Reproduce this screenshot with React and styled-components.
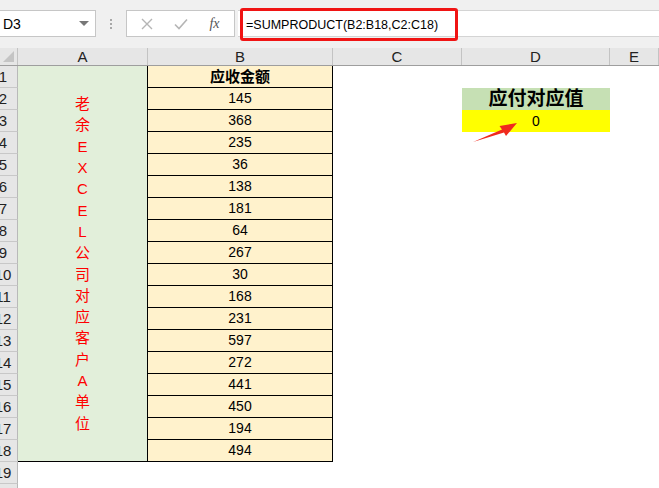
import React from "react";
import styled, { createGlobalStyle } from "styled-components";

const GlobalStyle = createGlobalStyle`
  html, body { margin: 0; padding: 0; background: #fff; }
  body {
    width: 659px;
    height: 488px;
    overflow: hidden;
    font-family: "Liberation Sans", "Noto Sans CJK SC", sans-serif;
  }
  * { box-sizing: border-box; }
`;

const Window = styled.div`
  position: relative;
  width: 659px;
  height: 488px;
  overflow: hidden;
  background: #fff;
`;

const Toolbar = styled.div`
  height: 48px;
  background: #f0f0f0;
  display: flex;
  align-items: flex-start;
  padding-top: 10px;
`;

const NameBox = styled.div`
  width: 96px;
  height: 27px;
  background: #fff;
  border: 1px solid #c6c6c6;
  border-left: none;
  display: flex;
  align-items: center;
  justify-content: space-between;
  padding: 0 6px 0 3px;
  font-size: 14px;
  color: #000;
`;

const Caret = styled.span`
  width: 0;
  height: 0;
  border-left: 5px solid transparent;
  border-right: 5px solid transparent;
  border-top: 5px solid #777;
`;

const Grip = styled.div`
  width: 30px;
  height: 27px;
  display: flex;
  flex-direction: column;
  align-items: center;
  justify-content: center;
  gap: 2px;
  span {
    width: 2px;
    height: 2px;
    background: #a8a8a8;
  }
`;

const ActionBox = styled.div`
  width: 109px;
  height: 27px;
  background: #fff;
  border: 1px solid #c6c6c6;
  display: flex;
  align-items: center;
  justify-content: space-around;
  padding: 0 4px;
`;

const Fx = styled.span`
  font-family: "Liberation Serif", serif;
  font-style: italic;
  font-size: 14px;
  color: #555;
`;

const FormulaField = styled.div`
  flex: 1;
  height: 27px;
  margin-left: 3px;
  background: #fff;
  border-top: 1px solid #d4d4d4;
  border-bottom: 1px solid #d4d4d4;
  position: relative;
`;

const FormulaHighlight = styled.div`
  position: absolute;
  left: 2px;
  top: -3px;
  width: 218px;
  height: 33px;
  border: 3px solid #f01414;
  border-radius: 3px;
  display: flex;
  align-items: center;
  padding-left: 3px;
  font-size: 12.5px;
  color: #000;
`;

const HeaderRow = styled.div`
  display: grid;
  grid-template-columns: 18px 130px 185px 129px 148px 1fr;
  height: 18px;
  background: #e6e6e6;
  border-bottom: 1px solid #9e9e9e;
`;

const ColHead = styled.div`
  border-right: 1px solid #c3c3c3;
  font-size: 15px;
  line-height: 17px;
  text-align: center;
  color: #222;
  position: relative;
  overflow: hidden;
`;

const Corner = styled.div`
  position: absolute;
  right: 3px;
  bottom: 3px;
  width: 0;
  height: 0;
  border-left: 11px solid transparent;
  border-bottom: 11px solid #c4c4c4;
`;

const Sheet = styled.div`
  display: grid;
  grid-template-columns: 18px 130px 185px 129px 148px 1fr;
  grid-auto-rows: 22px;
`;

const RowHead = styled.div`
  grid-column: 1;
  background: #e6e6e6;
  border-right: 1px solid #b9b9b9;
  border-bottom: 1px solid #c8c8c8;
  overflow: hidden;
  position: relative;
  font-size: 15px;
  line-height: 22px;
  color: #222;
  span {
    position: absolute;
    left: -11px;
    width: 28px;
    text-align: center;
  }
`;

const MergedA = styled.div`
  grid-column: 2;
  grid-row: 1 / span 18;
  background: #e2efda;
  border-right: 1px solid #000;
  border-bottom: 1px solid #000;
  display: flex;
  flex-direction: column;
  align-items: center;
  justify-content: center;
  color: #ff0000;
  font-size: 15px;
  line-height: 21.3px;
  font-family: "Liberation Sans", "Noto Sans CJK SC", sans-serif;
`;

const AmountCell = styled.div`
  grid-column: 3;
  background: #fff2cc;
  border-right: 1px solid #000;
  border-bottom: 1px solid #000;
  text-align: center;
  line-height: 21px;
  font-size: ${(p) => (p.$head ? "15px" : "14px")};
  font-weight: ${(p) => (p.$head ? 700 : 400)};
  color: #000;
`;

const ValueCell = styled.div`
  grid-column: 5;
  background: ${(p) => p.$bg};
  text-align: center;
  line-height: 22px;
  font-size: ${(p) => (p.$head ? "19px" : "14px")};
  font-weight: ${(p) => (p.$head ? 700 : 400)};
  color: #000;
`;

const Arrow = styled.svg`
  position: absolute;
  left: 0;
  top: 0;
  pointer-events: none;
`;

const amounts = [145, 368, 235, 36, 138, 181, 64, 267, 30, 168, 231, 597, 272, 441, 450, 194, 494];
const label = "老余EXCEL公司对应客户A单位".split("");

export default function App() {
  const rows = Array.from({ length: 20 }, (_, i) => i + 1);
  return (
    <Window>
      <GlobalStyle />
      <Toolbar>
        <NameBox>
          D3
          <Caret />
        </NameBox>
        <Grip>
          <span />
          <span />
          <span />
        </Grip>
        <ActionBox>
          <svg width="12" height="12" viewBox="0 0 12 12">
            <path d="M1 1L11 11M11 1L1 11" stroke="#b5b5b5" strokeWidth="1.4" fill="none" />
          </svg>
          <svg width="14" height="12" viewBox="0 0 14 12">
            <path d="M1 6.5L5 10.5L13 1.5" stroke="#b5b5b5" strokeWidth="1.6" fill="none" />
          </svg>
          <Fx>fx</Fx>
        </ActionBox>
        <FormulaField>
          <FormulaHighlight>=SUMPRODUCT(B2:B18,C2:C18)</FormulaHighlight>
        </FormulaField>
      </Toolbar>

      <HeaderRow>
        <ColHead>
          <Corner />
        </ColHead>
        <ColHead>A</ColHead>
        <ColHead>B</ColHead>
        <ColHead>C</ColHead>
        <ColHead>D</ColHead>
        <ColHead>E</ColHead>
      </HeaderRow>

      <Sheet>
        {rows.map((r) => (
          <RowHead key={r} style={{ gridRow: r }}>
            <span>{r}</span>
          </RowHead>
        ))}
        <MergedA>
          {label.map((c, i) => (
            <span key={i}>{c}</span>
          ))}
        </MergedA>
        <AmountCell $head style={{ gridRow: 1 }}>
          应收金额
        </AmountCell>
        {amounts.map((n, i) => (
          <AmountCell key={i} style={{ gridRow: i + 2 }}>
            {n}
          </AmountCell>
        ))}
        <ValueCell $head $bg="#c6e0b4" style={{ gridRow: 2 }}>
          应付对应值
        </ValueCell>
        <ValueCell $bg="#ffff00" style={{ gridRow: 3 }}>
          0
        </ValueCell>
      </Sheet>

      <Arrow width="659" height="488" viewBox="0 0 659 488">
        <path d="M473 142 L502 129.5 L499.5 126 L517 123 L506 136 L504 132.5 Z" fill="#f02a1e" />
      </Arrow>
    </Window>
  );
}
